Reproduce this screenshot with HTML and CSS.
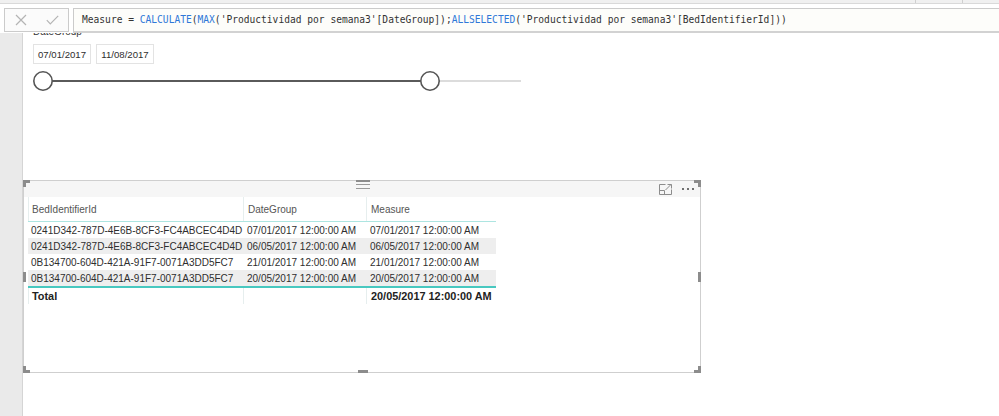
FILE: index.html
```html
<!DOCTYPE html>
<html>
<head>
<meta charset="utf-8">
<title>Power BI</title>
<link rel="stylesheet" href="styles.css">
</head>
<body>
<div class="topstrip"><span class="tab"></span><span class="tab"></span></div>
<div class="formula">
  <div class="fx-buttons">
    <span class="fx-btn"><svg width="12" height="12" viewBox="0 0 12 12"><path d="M1 1L11 11M11 1L1 11" stroke="#b4b4b4" stroke-width="1.2" fill="none"/></svg></span>
    <span class="fx-btn"><svg width="13" height="10" viewBox="0 0 13 10"><path d="M0.8 5.2L4.3 8.8L12.2 0.8" stroke="#b4b4b4" stroke-width="1.2" fill="none"/></svg></span>
  </div>
  <div class="fx-input">Measure = <span class="kw">CALCULATE</span>(<span class="kw">MAX</span>('Productividad por semana3'[DateGroup]);<span class="kw">ALLSELECTED</span>('Productividad por semana3'[BedIdentifierId]))</div>
</div>
<div class="workspace">
  <div class="sidebar"></div>
  <div class="canvas">
    <div class="slicer">
      <div class="slicer-label">DateGroup</div>
      <div class="slicer-dates"><span class="date-box">07/01/2017</span><span class="date-box">11/08/2017</span></div>
      <svg class="slider" width="492" height="22" viewBox="0 0 492 22">
        <line x1="10" y1="11" x2="397" y2="11" stroke="#5a5a5a" stroke-width="2"/>
        <line x1="397" y1="11" x2="488" y2="11" stroke="#dcdcdc" stroke-width="2"/>
        <circle cx="10" cy="11" r="9.2" fill="#fff" stroke="#555" stroke-width="1.6"/>
        <circle cx="397" cy="11" r="9.2" fill="#fff" stroke="#555" stroke-width="1.6"/>
      </svg>
    </div>
    <div class="visual">
      <div class="vis-header">
        <svg width="13" height="11" viewBox="0 0 13 11"><path d="M6.5 0.5H0.5V10.5H12.5V5.5" stroke="#8c8c8c" fill="none"/><path d="M0.5 6.5H5.5V10.5" stroke="#8c8c8c" fill="none"/><path d="M6.5 6L12 0.5M8.5 0.5H12.5V4.5" stroke="#8c8c8c" fill="none"/></svg>
        <span class="dots"><i></i><i></i><i></i></span>
      </div>
      <div class="table">
        <div class="row head"><div class="cell">BedIdentifierId</div><div class="cell">DateGroup</div><div class="cell">Measure</div></div>
        <div class="row"><div class="cell">0241D342-787D-4E6B-8CF3-FC4ABCEC4D4D</div><div class="cell">07/01/2017 12:00:00 AM</div><div class="cell">07/01/2017 12:00:00 AM</div></div>
        <div class="row stripe"><div class="cell">0241D342-787D-4E6B-8CF3-FC4ABCEC4D4D</div><div class="cell">06/05/2017 12:00:00 AM</div><div class="cell">06/05/2017 12:00:00 AM</div></div>
        <div class="row"><div class="cell">0B134700-604D-421A-91F7-0071A3DD5FC7</div><div class="cell">21/01/2017 12:00:00 AM</div><div class="cell">21/01/2017 12:00:00 AM</div></div>
        <div class="row stripe"><div class="cell">0B134700-604D-421A-91F7-0071A3DD5FC7</div><div class="cell">20/05/2017 12:00:00 AM</div><div class="cell">20/05/2017 12:00:00 AM</div></div>
        <div class="row total"><div class="cell">Total</div><div class="cell"></div><div class="cell">20/05/2017 12:00:00 AM</div></div>
      </div>
      <span class="grip"></span>
      <span class="corner c-tl"></span><span class="corner c-tr"></span><span class="corner c-bl"></span><span class="corner c-br"></span>
      <span class="mid m-t"></span><span class="mid m-b"></span><span class="mid m-l"></span><span class="mid m-r"></span>
    </div>
  </div>
</div>
</body>
</html>
```
FILE: styles.css
```css
* { box-sizing: border-box; }
html, body { margin: 0; padding: 0; }
body {
  width: 999px;
  height: 416px;
  overflow: hidden;
  background: #fff;
  font-family: "Liberation Sans", Arial, sans-serif;
  color: #333;
}
.topstrip {
  height: 4px;
  background: #f0f0f0;
  border-bottom: 1px solid #d9d9d9;
  display: flex;
  gap: 46px;
  padding-left: 915px;
}
.tab { width: 1px; height: 3px; background: #cfcfcf; }

.formula {
  position: relative;
  z-index: 2;
  background: #fff;
  display: flex;
  gap: 4px;
  margin-top: 4px;
  height: 25px;
  padding-left: 4px;
}
.fx-buttons {
  width: 65px;
  height: 24px;
  border: 1px solid #cbcbcb;
  background: #fbfbfb;
  display: flex;
}
.fx-btn { flex: 1; display: flex; align-items: center; justify-content: center; }
.fx-input {
  flex: 1;
  height: 25px;
  border-top: 1px solid #cbcbcb;
  border-left: 1px solid #cbcbcb;
  border-bottom: 2px solid #d2d2d2;
  background: #fdfdfa;
  padding-left: 8px;
  font-family: "DejaVu Sans Mono", monospace;
  font-size: 9.6px;
  line-height: 22px;
  color: #333;
  white-space: nowrap;
  overflow: hidden;
}
.kw { color: #2f78d8; }

.workspace { display: flex; height: 383px; }
.sidebar { width: 23px; flex: none; background: #eaeaea; border-right: 1px solid #d5d5d5; }
.canvas { flex: 1; }

.slicer { margin-top: -7px; padding-left: 10px; }
.slicer-label { font-size: 10px; line-height: 12px; color: #333; }
.slicer-dates { display: flex; gap: 5px; margin-top: 6px; }
.date-box {
  width: 58px;
  height: 20px;
  border: 1px solid #e3e3e3;
  font-size: 9.6px;
  display: flex;
  align-items: center;
  justify-content: center;
  color: #2e2e2e;
}
.slider { display: block; margin-top: 6px; }

.visual {
  position: relative;
  margin-top: 88px;
  width: 678px;
  height: 193px;
  border: 1px solid #cfcfcf;
}
.vis-header {
  height: 16px;
  background: #f6f6f6;
  display: flex;
  justify-content: flex-end;
  align-items: center;
  gap: 10px;
  padding-right: 6px;
}
.dots { display: flex; gap: 3px; }
.dots i { width: 2px; height: 2px; background: #707070; display: block; }

.table { margin-left: 4px; width: 468px; }
.row {
  display: grid;
  grid-template-columns: 215px 123px 130px;
  height: 16px;
  align-items: center;
  font-size: 10px;
  color: #2e2e2e;
}
.cell { padding-left: 3px; white-space: nowrap; }
.cell + .cell { padding-left: 4px; }
.head {
  height: 25px;
  border-bottom: 1px solid #ade5e1;
  color: #555;
  align-items: stretch;
}
.head .cell, .total .cell {
  border-left: 1px solid #e6eeee;
  display: flex;
  align-items: center;
}
.stripe { background: #eeeeee; }
.total {
  height: 18px;
  border-top: 2px solid #48c8c0;
  font-weight: bold;
  font-size: 10.9px;
  color: #222;
  align-items: stretch;
}

.grip {
  position: absolute;
  top: 3px;
  left: 332px;
  width: 14px;
  height: 5px;
  border-top: 1px solid #9a9a9a;
  border-bottom: 1px solid #9a9a9a;
}
.corner { position: absolute; width: 7px; height: 7px; }
.c-tl { left: -1px; top: -1px; border-top: 3px solid #8c8c8c; border-left: 3px solid #8c8c8c; }
.c-tr { right: -1px; top: -1px; border-top: 3px solid #8c8c8c; border-right: 3px solid #8c8c8c; }
.c-bl { left: -1px; bottom: -1px; border-bottom: 3px solid #8c8c8c; border-left: 3px solid #8c8c8c; }
.c-br { right: -1px; bottom: -1px; border-bottom: 3px solid #8c8c8c; border-right: 3px solid #8c8c8c; }
.mid { position: absolute; background: #8c8c8c; }
.m-t { top: -1px; left: 332px; width: 14px; height: 2px; }
.m-b { bottom: -1px; left: 334px; width: 10px; height: 3px; }
.m-l { left: -1px; top: 91px; width: 3px; height: 10px; }
.m-r { right: -1px; top: 91px; width: 3px; height: 10px; }
```
